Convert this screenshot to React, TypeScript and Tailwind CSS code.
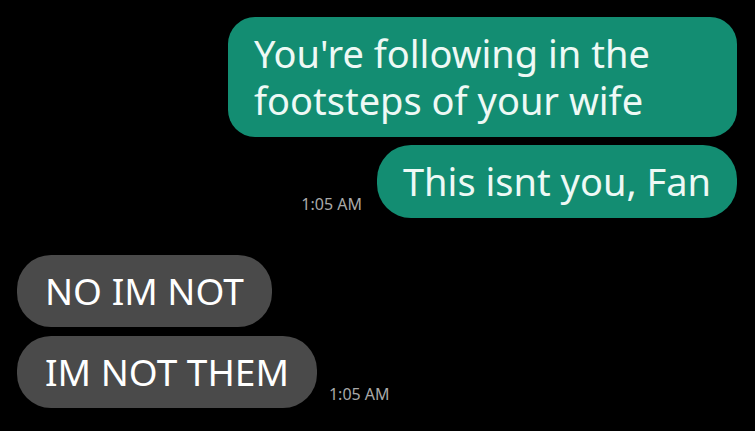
import React from "react";

type Msg = { text: string; time?: string };

const sent: Msg[] = [
    { text: "You're following in the footsteps of your wife" },
    { text: "This isnt you, Fan", time: "1:05 AM" },
];

const received: Msg[] = [
    { text: "NO IM NOT" },
    { text: "IM NOT THEM", time: "1:05 AM" },
];

function Time({ time }: { time: string }) {
    return <div className="text-[16px] leading-[20px] text-[#a9a9a9] mb-[4px] whitespace-nowrap">{time}</div>;
}

function App() {
    return (
        <div
            className="w-[755px] h-[431px] bg-black overflow-hidden"
            style={{ fontFamily: '"Noto Sans", "DejaVu Sans", sans-serif' }}
        >
            {/* outgoing */}
            <div className="flex flex-col items-end gap-[8px] pt-[17px] pr-[18px]">
                <div className="w-[509px] rounded-[27px] bg-[#138d72] px-[26px] py-[13px] text-[38px] leading-[47px] text-[#eef9f5]">
                    {sent[0].text}
                </div>
                <div className="flex items-end gap-[15px]">
                    <Time time={sent[1].time!} />
                    <div className="rounded-[34px] bg-[#138d72] px-[26px] py-[13px] text-[38px] leading-[47px] text-[#eef9f5] whitespace-nowrap">
                        {sent[1].text}
                    </div>
                </div>
            </div>

            {/* incoming */}
            <div className="flex flex-col items-start gap-[9px] mt-[37px] pl-[17px]">
                <div className="rounded-[34px] bg-[#4a4a4a] px-[28px] py-[12px] text-[37px] leading-[48px] text-white whitespace-nowrap">
                    {received[0].text}
                </div>
                <div className="flex items-end gap-[12px]">
                    <div className="rounded-[34px] bg-[#4a4a4a] px-[28px] py-[12px] text-[37px] leading-[48px] text-white whitespace-nowrap">
                        {received[1].text}
                    </div>
                    <Time time={received[1].time!} />
                </div>
            </div>
        </div>
    );
}

export default App;
